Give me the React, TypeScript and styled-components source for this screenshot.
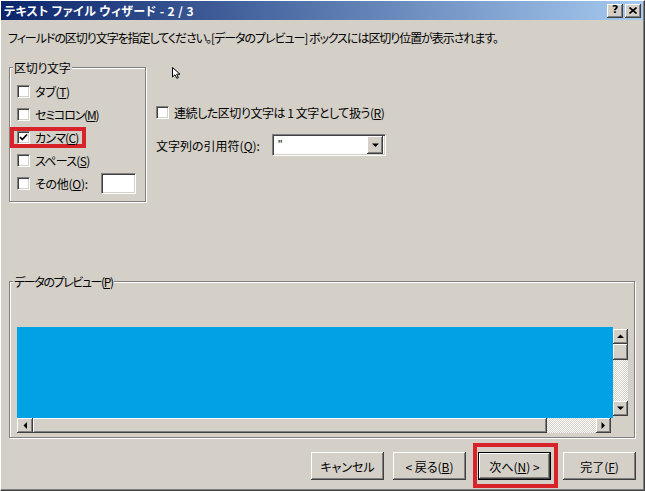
import React from 'react';
import styled, { createGlobalStyle } from 'styled-components';

const BG = '#d4d0c8';
const RED = '#d8232a';

const Global = createGlobalStyle`
  html, body { margin: 0; padding: 0; }
  body {
    width: 645px; height: 491px; overflow: hidden; background: ${BG};
    font-family: "Noto Sans CJK JP", "Noto Sans", sans-serif;
    font-size: 12px; color: #000;
    font-feature-settings: "palt";
    letter-spacing: -0.3px;
  }
`;

const Window = styled.div`
  box-sizing: border-box;
  width: 645px;
  height: 491px;
  display: flex;
  flex-direction: column;
  background: ${BG};
  border-top: 1px solid #fff;
  border-left: 1px solid #fff;
  border-right: 1px solid #404040;
  border-bottom: 1px solid #404040;
  box-shadow: inset -1px -1px 0 #808080;
  padding-right: 1px;
`;

const TitleBar = styled.div`
  height: 19px;
  flex: none;
  display: flex;
  align-items: center;
  background: linear-gradient(to right, #0a246a, #a6caf0);
  padding: 0 2px 0 3px;
`;

const TitleText = styled.div`
  flex: 1;
  color: #fff;
  font-weight: bold;
  font-size: 12px;
  line-height: 19px;
  letter-spacing: 0.4px;
  white-space: pre;
`;

const raised = `
  background: ${BG};
  box-shadow: inset -1px -1px 0 #404040, inset 1px 1px 0 #fff, inset -2px -2px 0 #808080;
`;

const CaptionButton = styled.div<{ gap?: number }>`
  ${raised}
  width: 16px;
  height: 14px;
  margin-left: ${p => p.gap ?? 0}px;
  display: flex;
  align-items: center;
  justify-content: center;
  font-family: "DejaVu Sans", sans-serif;
  font-weight: bold;
  font-size: 11px;
  line-height: 14px;
  padding-bottom: 1px;
  box-sizing: border-box;
`;

const Body = styled.div`
  flex: 1;
  display: flex;
  flex-direction: column;
  padding: 0 6px 0 8px;
`;

const Instruction = styled.div`
  margin: 11px 0 0 -1px;
  line-height: 14px;
  letter-spacing: -1.05px;
  white-space: pre;
`;

const TopSection = styled.div`
  display: flex;
  align-items: flex-start;
  gap: 10px;
  margin-top: 22px;
`;

const Group = styled.div<{ w: number; h: number }>`
  box-sizing: border-box;
  width: ${p => p.w}px;
  height: ${p => p.h}px;
  border: 1px solid #808080;
  box-shadow: inset 1px 1px 0 #fff, 1px 1px 0 #fff;
  display: flex;
  flex-direction: column;
  flex: none;
`;

const Legend = styled.div<{ ls?: number }>`
  align-self: flex-start;
  margin: -7px 0 0 3px;
  padding: 0 1px;
  background: ${BG};
  height: 13px;
  line-height: 13px;
  letter-spacing: ${p => p.ls ?? -0.3}px;
  white-space: pre;
`;

const OptionList = styled.div`
  display: flex;
  flex-direction: column;
  margin-top: 6px;
  padding-left: 3px;
`;

const OptionRow = styled.div`
  height: 23px;
  display: flex;
  align-items: center;
  padding-left: 4px;
`;

const Highlight = styled.span<{ pad: string; neg: string }>`
  display: inline-flex;
  align-items: center;
  padding: ${p => p.pad};
  margin: ${p => p.neg};
  box-shadow: 0 0 0 4px ${RED};
`;

const Box = styled.span`
  box-sizing: border-box;
  width: 13px;
  height: 13px;
  flex: none;
  background: #fff;
  border-top: 1px solid #808080;
  border-left: 1px solid #808080;
  border-right: 1px solid #fff;
  border-bottom: 1px solid #fff;
  box-shadow: inset 1px 1px 0 #404040, inset -1px -1px 0 ${BG};
  display: flex;
  align-items: center;
  justify-content: center;
`;

const Label = styled.span<{ gap?: number; ls?: number }>`
  margin-left: ${p => p.gap ?? 5}px;
  line-height: 13px;
  letter-spacing: ${p => p.ls ?? -0.3}px;
  white-space: pre;
`;

const TextInput = styled.div<{ w: number; h: number; ml?: number }>`
  box-sizing: border-box;
  width: ${p => p.w}px;
  height: ${p => p.h}px;
  margin-left: ${p => p.ml ?? 0}px;
  background: #fff;
  border-top: 1px solid #808080;
  border-left: 1px solid #808080;
  border-right: 1px solid #fff;
  border-bottom: 1px solid #fff;
  box-shadow: inset 1px 1px 0 #404040, inset -1px -1px 0 ${BG};
  display: flex;
  align-items: center;
  padding: 2px;
`;

const ComboText = styled.span`
  flex: 1;
  padding-left: 3px;
  font-family: "Liberation Sans", sans-serif;
  font-size: 12px;
`;

const DropButton = styled.div`
  ${raised}
  width: 16px;
  height: 18px;
  display: flex;
  align-items: center;
  justify-content: center;
`;

const RightColumn = styled.div`
  display: flex;
  flex-direction: column;
`;

const CursorMark = styled.svg`
  display: block;
  margin-left: 16px;
`;

const Option2 = styled.div<{ mt: number }>`
  display: flex;
  align-items: center;
  height: 16px;
  margin-top: ${p => p.mt}px;
`;

const ComboRow = styled.div`
  display: flex;
  align-items: center;
  margin-top: 14px;
`;

const ComboLabel = styled.span`
  width: 116px;
  letter-spacing: 0;
  white-space: pre;
`;

const PreviewGroup = styled(Group)`
  margin-top: 79px;
`;

const ListBox = styled.div`
  margin: 39px 0 0 7px;
  width: 611px;
  height: 106px;
  display: grid;
  grid-template-columns: 596px 15px;
  grid-template-rows: 91px 15px;
`;

const Redacted = styled.div`
  background: #00a2e6;
`;

const VScroll = styled.div`
  display: flex;
  flex-direction: column;
  padding: 2px 0;
`;

const HScroll = styled.div`
  display: flex;
  padding-right: 2px;
`;

const ScrollButton = styled.div<{ w: number; h: number }>`
  ${raised}
  flex: none;
  width: ${p => p.w}px;
  height: ${p => p.h}px;
  display: flex;
  align-items: center;
  justify-content: center;
`;

const Track = styled.div`
  flex: 1;
  background: repeating-conic-gradient(#fff 0 25%, ${BG} 0 50%) 0 0 / 2px 2px;
`;

const ButtonRow = styled.div`
  display: flex;
  justify-content: flex-end;
  margin: 14px 1px 0 0;
`;

const PushButton = styled.div<{ ml?: number; isDefault?: boolean }>`
  box-sizing: border-box;
  width: 73px;
  height: 28px;
  margin-left: ${p => p.ml ?? 0}px;
  display: flex;
  align-items: center;
  justify-content: center;
  letter-spacing: 0;
  white-space: pre;
  background: ${BG};
  box-shadow: ${p =>
    p.isDefault
      ? `inset 0 0 0 1px #000, inset -2px -2px 0 #404040, inset 2px 2px 0 #fff, inset -3px -3px 0 #808080`
      : `inset -1px -1px 0 #404040, inset 1px 1px 0 #fff, inset -2px -2px 0 #808080`};
`;

const U = styled.u`
  text-decoration-thickness: 1px;
  text-underline-offset: 1px;
`;

const Check = () => (
  <svg width="9" height="9" viewBox="0 0 9 9">
    <polyline points="1,4 3.3,6.5 8,1.5" fill="none" stroke="#000" strokeWidth="1.8" />
  </svg>
);

const Tri = ({ dir }: { dir: 'up' | 'down' | 'left' | 'right' }) => {
  const pts = {
    up: '0,4 7,4 3.5,0.5',
    down: '0,0.5 7,0.5 3.5,4',
    left: '4,0 4,7 0.5,3.5',
    right: '0.5,0 0.5,7 4,3.5',
  }[dir];
  const horiz = dir === 'left' || dir === 'right';
  return (
    <svg width={horiz ? 5 : 7} height={horiz ? 7 : 5} viewBox={horiz ? '0 0 5 7' : '0 0 7 5'}>
      <polygon points={pts} fill="#000" />
    </svg>
  );
};

export default function App() {
  return (
    <>
      <Global />
      <Window>
        <TitleBar>
          <TitleText>テキスト ファイル ウィザード - 2 / 3</TitleText>
          <CaptionButton>?</CaptionButton>
          <CaptionButton gap={2}>
            <svg width="8" height="7" viewBox="0 0 8 7">
              <path d="M0.5 0.5 L7.5 6.5 M7.5 0.5 L0.5 6.5" stroke="#000" strokeWidth="1.6" />
            </svg>
          </CaptionButton>
        </TitleBar>
        <Body>
          <Instruction>
            フィールドの区切り文字を指定してください。[データのプレビュー] ボックスには区切り位置が表示されます。
          </Instruction>
          <TopSection>
            <Group w={137} h={135}>
              <Legend>区切り文字</Legend>
              <OptionList>
                <OptionRow>
                  <Box />
                  <Label>タブ(<U>T</U>)</Label>
                </OptionRow>
                <OptionRow>
                  <Box />
                  <Label ls={-1.2}>セミコロン(<U>M</U>)</Label>
                </OptionRow>
                <OptionRow>
                  <Highlight pad="0 3px 0 3px" neg="0 0 0 -3px">
                    <Box>
                      <Check />
                    </Box>
                    <Label ls={-0.8}>カンマ(<U>C</U>)</Label>
                  </Highlight>
                </OptionRow>
                <OptionRow>
                  <Box />
                  <Label ls={-0.7}>スペース(<U>S</U>)</Label>
                </OptionRow>
                <OptionRow>
                  <Box />
                  <Label>その他(<U>O</U>):</Label>
                  <TextInput w={35} h={21} ml={13} />
                </OptionRow>
              </OptionList>
            </Group>
            <RightColumn>
              <CursorMark width="10" height="12" viewBox="0 0 10 12">
                <path d="M0.5 0.5 V10 L3 7.8 L4.8 11.3 L6.4 10.6 L4.7 7.2 H8 Z" fill="#fff" stroke="#000" strokeWidth="1" />
              </CursorMark>
              <Option2 mt={25}>
                <Box />
                <Label ls={-0.45}>連続した区切り文字は 1 文字として扱う(<U>R</U>)</Label>
              </Option2>
              <ComboRow>
                <ComboLabel>
                  文字列の引用符(<U>Q</U>):
                </ComboLabel>
                <TextInput w={114} h={22}>
                  <ComboText>"</ComboText>
                  <DropButton>
                    <Tri dir="down" />
                  </DropButton>
                </TextInput>
              </ComboRow>
            </RightColumn>
          </TopSection>
          <PreviewGroup w={626} h={157}>
            <Legend ls={-1.4}>データのプレビュー(<U>P</U>)</Legend>
            <ListBox>
              <Redacted />
              <VScroll>
                <ScrollButton w={15} h={15}>
                  <Tri dir="up" />
                </ScrollButton>
                <ScrollButton w={15} h={16} />
                <Track />
                <ScrollButton w={15} h={15}>
                  <Tri dir="down" />
                </ScrollButton>
              </VScroll>
              <HScroll>
                <ScrollButton w={16} h={15}>
                  <Tri dir="left" />
                </ScrollButton>
                <ScrollButton w={514} h={15} />
                <Track />
                <ScrollButton w={15} h={15}>
                  <Tri dir="right" />
                </ScrollButton>
              </HScroll>
              <div />
            </ListBox>
          </PreviewGroup>
          <ButtonRow>
            <PushButton>キャンセル</PushButton>
            <PushButton ml={9}>
              &lt; 戻る(<U>B</U>)
            </PushButton>
            <Highlight pad="5px 3px 4px 1px" neg="-5px -3px -4px 11px">
              <PushButton isDefault>
                次へ(<U>N</U>) &gt;
              </PushButton>
            </Highlight>
            <PushButton ml={12}>
              完了(<U>F</U>)
            </PushButton>
          </ButtonRow>
        </Body>
      </Window>
    </>
  );
}
